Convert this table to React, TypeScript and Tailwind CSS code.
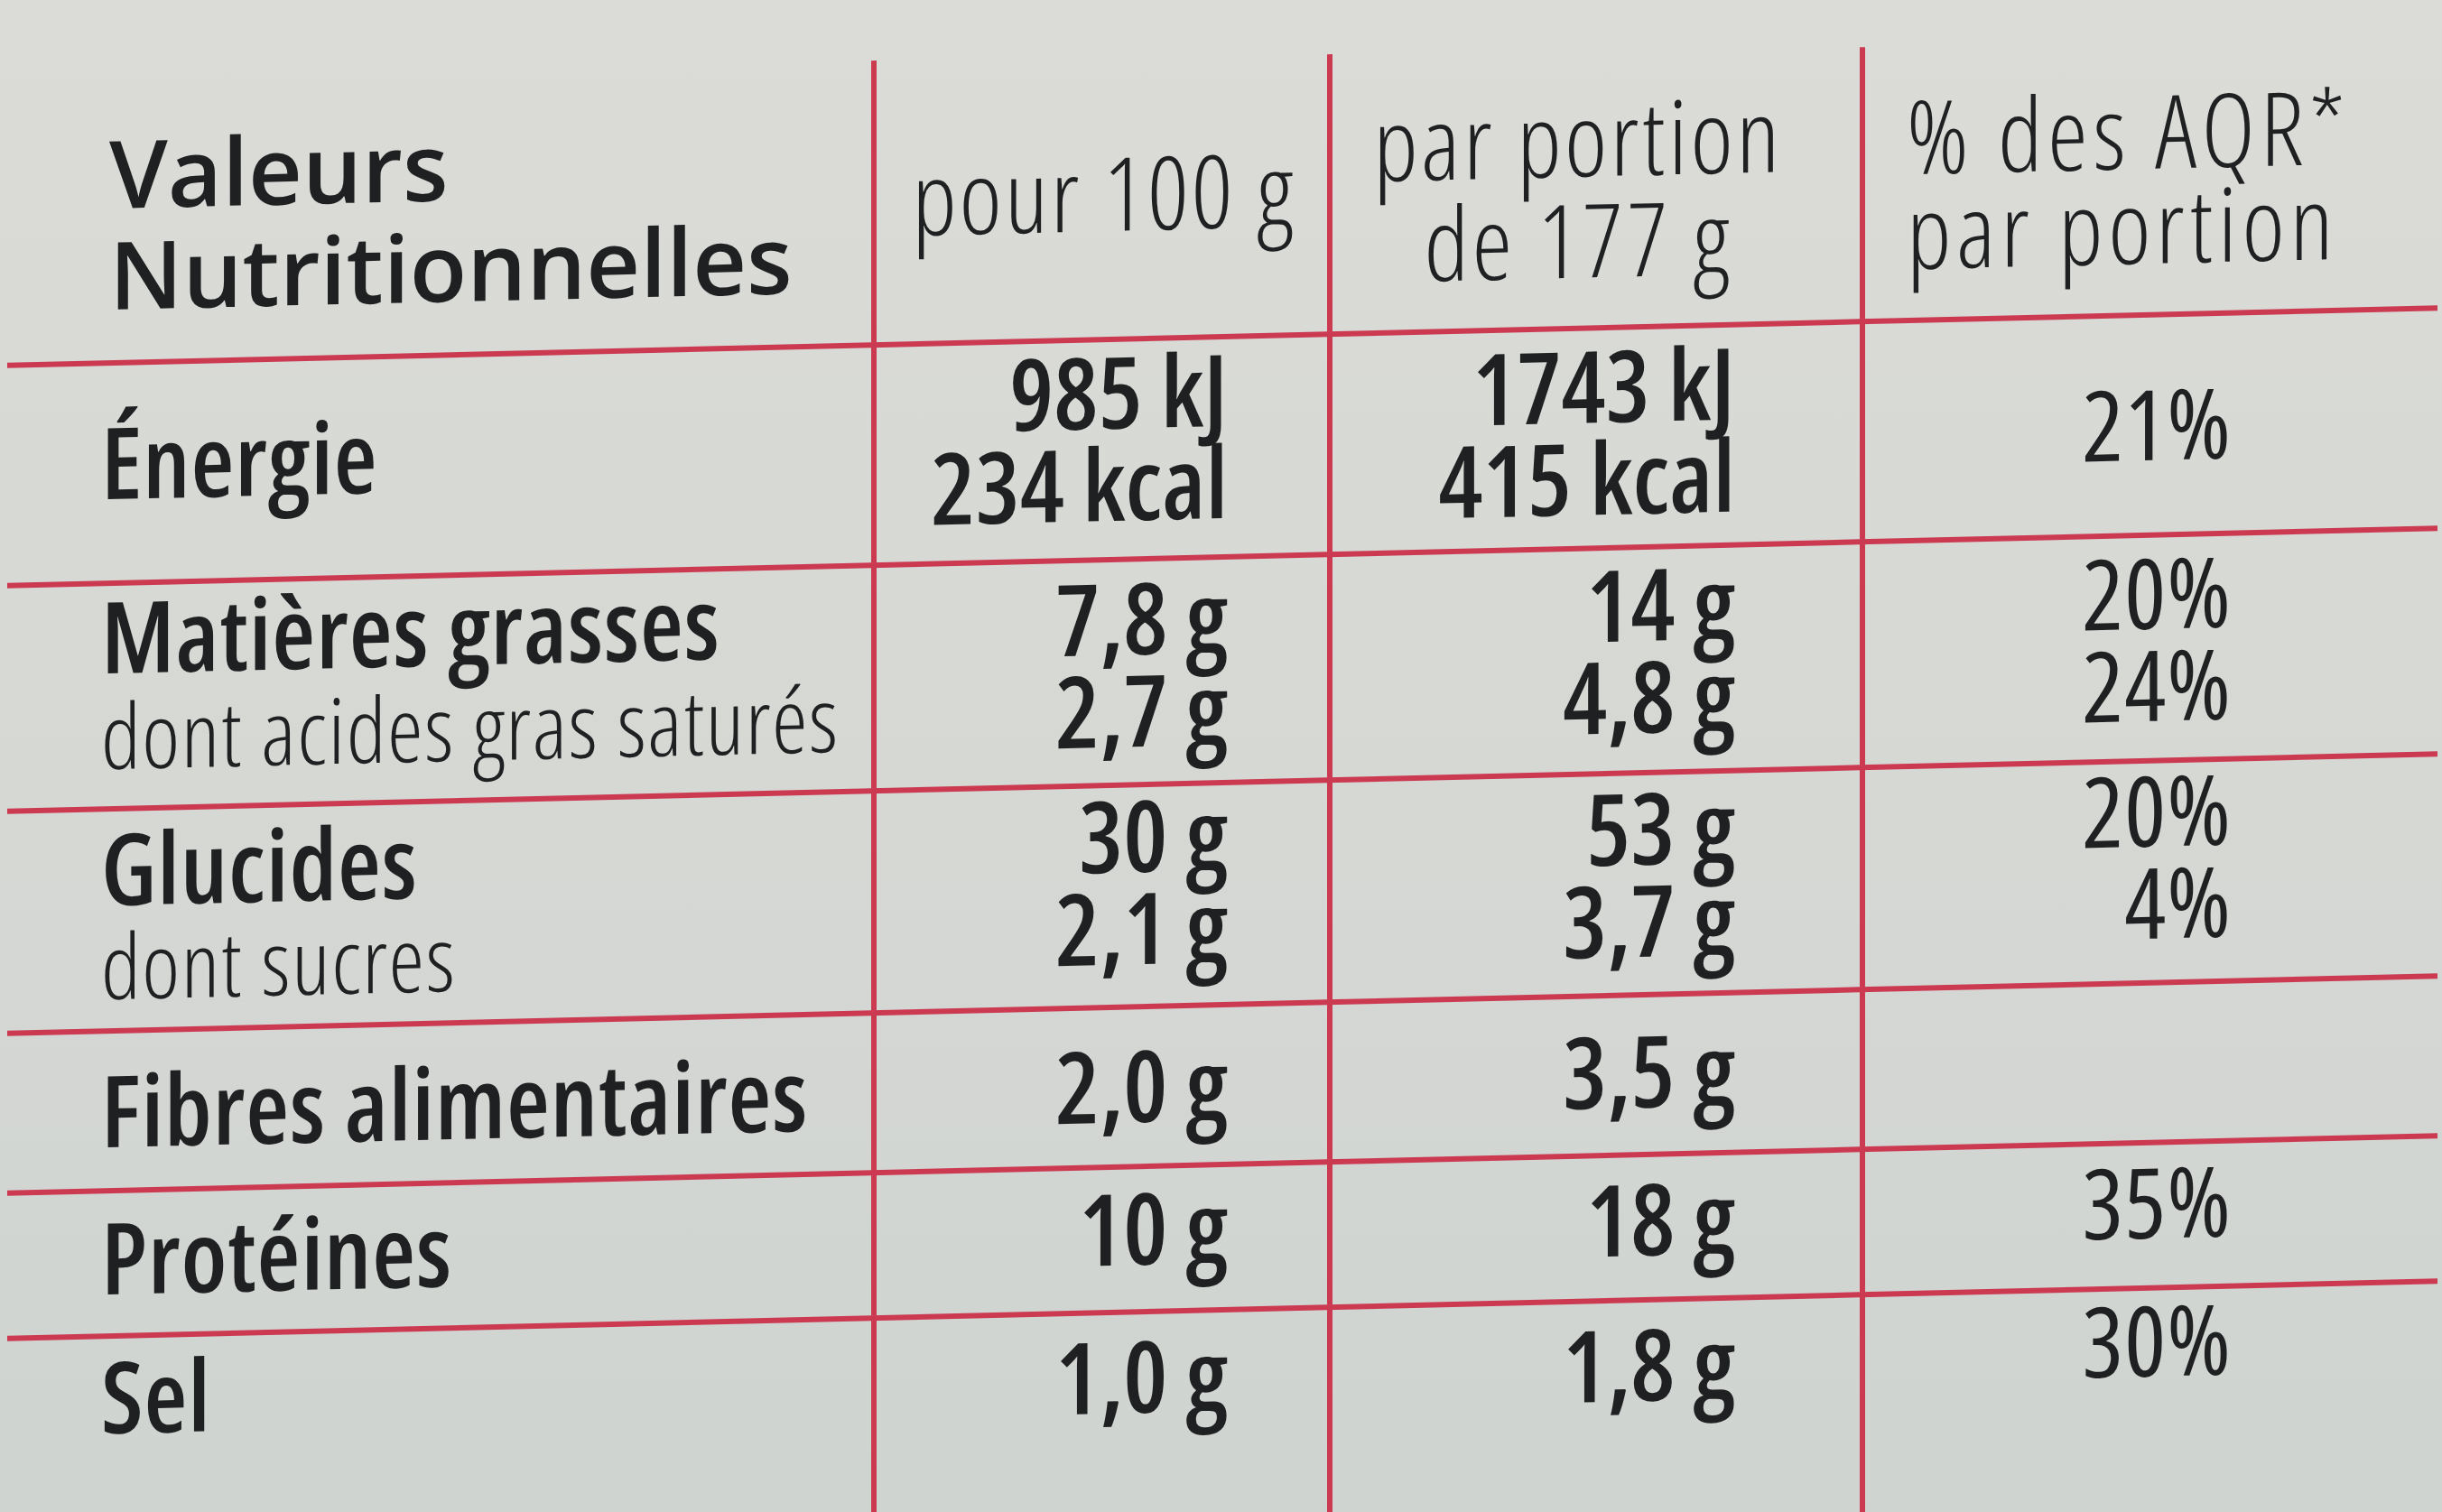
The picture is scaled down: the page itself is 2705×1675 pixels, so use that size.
type Row = {
  h: string;
  labelPt: string;
  label: string;
  subMt?: string;
  sub?: string;
  v1: string[];
  v1Mt: string;
  v2: string[];
  v2Mt: string;
  v3: string[];
  v3Mt: string;
};

// offsets measured from each red rule down to the text baselines
const ROWS: Row[] = [
  { h: 'h-[244px]', labelPt: 'pt-[53px]', label: 'Énergie', v1: ['985 kJ', '234 kcal'], v1Mt: 'mt-[2px]', v2: ['1743 kJ', '415 kcal'], v2Mt: 'mt-[8px]', v3: ['21%'], v3Mt: 'mt-[66px]' },
  { h: 'h-[250px]', labelPt: 'pt-[2px]', label: 'Matières grasses', subMt: 'mt-[6px]', sub: 'dont acides gras saturés', v1: ['7,8 g', '2,7 g'], v1Mt: 'mt-[9px]', v2: ['14 g', '4,8 g'], v2Mt: 'mt-[7px]', v3: ['20%', '24%'], v3Mt: 'mt-[9px]' },
  { h: 'h-[246px]', labelPt: 'pt-[9px]', label: 'Glucides', subMt: 'mt-[4px]', sub: 'dont sucres', v1: ['30 g', '2,1 g'], v1Mt: 'mt-0', v2: ['53 g', '3,7 g'], v2Mt: 'mt-[5px]', v3: ['20%', '4%'], v3Mt: 'mt-0' },
  { h: 'h-[177px]', labelPt: 'pt-[31px]', label: 'Fibres alimentaires', v1: ['2,0 g'], v1Mt: 'mt-[31px]', v2: ['3,5 g'], v2Mt: 'mt-[28px]', v3: [], v3Mt: 'mt-0' },
  { h: 'h-[161px]', labelPt: 'pt-[17px]', label: 'Protéines', v1: ['10 g'], v1Mt: 'mt-[12px]', v2: ['18 g'], v2Mt: 'mt-[15px]', v3: ['35%'], v3Mt: 'mt-[11px]' },
  { h: 'h-[300px]', labelPt: 'pt-[10px]', label: 'Sel', v1: ['1,0 g'], v1Mt: 'mt-[15px]', v2: ['1,8 g'], v2Mt: 'mt-[15px]', v3: ['30%'], v3Mt: 'mt-[3px]' },
];

const rule = 'border-[#cb3a51]';
const cell = `border-l-[6px] ${rule}`;
const value = "text-[110px] leading-[102px] font-semibold [font-stretch:75%] text-right";
const pct = "text-[108px] leading-[102px] font-medium [font-stretch:75%] tracking-[0.01em] text-right";
const head = "text-[113px] font-light [font-stretch:75%]";

export default function App() {
  return (
    <div className="w-[2705px] h-[1675px] overflow-hidden bg-linear-to-b from-[#dbdcd8] via-[#d6d8d4] to-[#cfd4d0] text-[#1f2022] font-['Open_Sans',sans-serif] pt-[58px]">
      {/* the printed table is photographed at a slight angle */}
      <div className="ml-[8px] w-[2692px] grid grid-cols-[957px_505px_590px_640px] skew-y-[-1.35deg]">
        {/* header */}
        <div className="h-[312px] pl-[113px] pt-[48px] text-[104px] leading-[112px] font-semibold">
          <div>Valeurs</div>
          <div>Nutritionnelles</div>
        </div>
        <div className={`${cell} ${head} pt-[96px] pl-[4px] text-center leading-[110px] tracking-[0.025em]`}>
          pour 100 g
        </div>
        <div className={`${cell} ${head} mt-[5px] pt-[42px] pr-[40px] text-center leading-[112px] tracking-[0.03em]`}>
          <div>par portion</div>
          <div>de 177 g</div>
        </div>
        <div className={`${cell} ${head} mt-[11px] pt-[46px] pl-[46px] text-left leading-[105px] tracking-[0.05em]`}>
          <div>% des AQR*</div>
          <div>par portion</div>
        </div>

        {ROWS.map(r => (
          <div key={r.label} className="contents">
            <div className={`${r.h} ${r.labelPt} border-t-[6px] ${rule} pl-[104px]`}>
              <div className="text-[110px] leading-[104px] font-semibold [font-stretch:75%] tracking-[0.008em] whitespace-nowrap">{r.label}</div>
              {r.sub && (
                <div className={`${r.subMt} text-[100px] leading-[104px] font-light [font-stretch:75%] tracking-[0.015em] whitespace-nowrap`}>{r.sub}</div>
              )}
            </div>
            <div className={`${cell} border-t-[6px] pr-[110px]`}>
              <div className={`${r.v1Mt} ${value}`}>
                {r.v1.map(t => <div key={t}>{t}</div>)}
              </div>
            </div>
            <div className={`${cell} border-t-[6px] pr-[138px]`}>
              <div className={`${r.v2Mt} ${value}`}>
                {r.v2.map(t => <div key={t}>{t}</div>)}
              </div>
            </div>
            <div className={`${cell} border-t-[6px] pr-[228px]`}>
              <div className={`${r.v3Mt} ${pct}`}>
                {r.v3.map(t => <div key={t}>{t}</div>)}
              </div>
            </div>
          </div>
        ))}
      </div>
    </div>
  );
}
